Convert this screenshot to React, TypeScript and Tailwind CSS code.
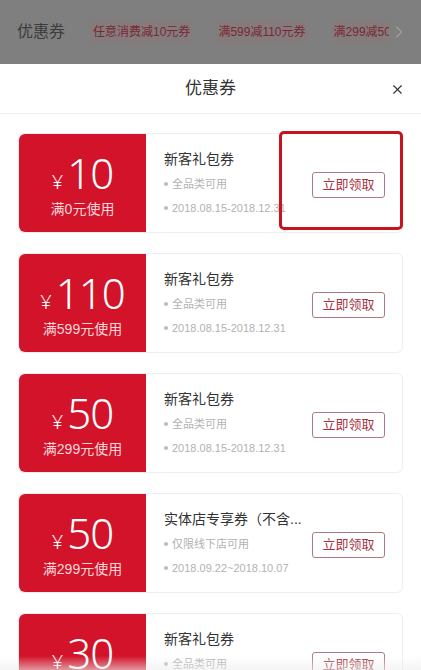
import { X, ChevronRight } from "lucide-react";

type Coupon = {
  amount: string;
  limit: string;
  title: string;
  scope: string;
  period: string;
};

const coupons: Coupon[] = [
  { amount: "10", limit: "满0元使用", title: "新客礼包券", scope: "全品类可用", period: "2018.08.15-2018.12.31" },
  { amount: "110", limit: "满599元使用", title: "新客礼包券", scope: "全品类可用", period: "2018.08.15-2018.12.31" },
  { amount: "50", limit: "满299元使用", title: "新客礼包券", scope: "全品类可用", period: "2018.08.15-2018.12.31" },
  { amount: "50", limit: "满299元使用", title: "实体店专享券（不含...", scope: "仅限线下店可用", period: "2018.09.22~2018.10.07" },
  { amount: "30", limit: "满199元使用", title: "新客礼包券", scope: "全品类可用", period: "2018.08.15-2018.12.31" },
];

const font = { fontFamily: '"Liberation Sans", "Noto Sans CJK SC", sans-serif' };
const numFont = { fontFamily: '"Noto Sans", "Liberation Sans", sans-serif' };

export default function App() {
  return (
    <div className="relative h-[670px] w-[421px] overflow-hidden bg-white" style={font}>
      {/* dimmed page header behind the sheet */}
      <div className="flex h-[64px] items-center bg-[#7f7f7f] pl-[17px] pr-[12px]">
        <span className="text-[16px] text-[#3c3c3c]">优惠券</span>
        <div className="ml-[26px] flex flex-1 items-center overflow-hidden whitespace-nowrap text-[12px] text-[#7c2733]">
          <span className="bg-[#847c7c] px-[2px] py-[3px]">任意消费减10元券</span>
          <span className="ml-[24px] bg-[#847c7c] px-[2px] py-[3px]">满599减110元券</span>
          <span className="ml-[24px] w-[64px] overflow-hidden bg-[#847c7c] px-[2px] py-[3px]">满299减50元券</span>
        </div>
        <ChevronRight className="h-[20px] w-[20px] text-[#a0a0a0]" strokeWidth={1.3} />
      </div>

      {/* sheet */}
      <div className="flex h-[50px] items-center justify-center border-b border-[#efefef]">
        <span className="text-[17px] text-[#333]">优惠券</span>
        <X className="absolute right-[16px] top-[82px] h-[15px] w-[15px] text-[#333]" strokeWidth={1.8} />
      </div>

      <div className="flex flex-col gap-[20px] px-[18px] pt-[19px]">
        {coupons.map((c, i) => (
          <div key={i} className="relative flex h-[100px] rounded-[6px] border border-[#eeeeee] bg-white">
            <div className="flex w-[127px] shrink-0 flex-col items-center justify-center rounded-l-[6px] bg-[#d21329] pt-[2px] text-white">
              <div className="flex items-baseline leading-none" style={numFont}>
                <span className="mr-[4px] text-[20px] font-light">¥</span>
                <span className="text-[42px] font-light tracking-[-1px]">{c.amount}</span>
              </div>
              <span className="mt-[8px] text-[14px] leading-none text-[#f8d6da]">{c.limit}</span>
            </div>
            <div className="flex flex-1 items-center pl-[18px] pr-[17px]">
              <div className="flex-1 whitespace-nowrap">
                <p className="text-[14px] leading-[18px] text-[#333]">{c.title}</p>
                <p className="mt-[8px] flex items-center text-[11px] leading-[16px] text-[#b2b2b2]">
                  <span className="mr-[4px] h-[4px] w-[4px] rounded-full bg-[#bbbbbb]" />
                  {c.scope}
                </p>
                <p className="mt-[8px] flex items-center text-[11px] leading-[16px] text-[#b2b2b2]">
                  <span className="mr-[4px] h-[4px] w-[4px] rounded-full bg-[#bbbbbb]" />
                  {c.period}
                </p>
              </div>
              <button
                type="button"
                className="mt-[4px] flex h-[26px] w-[73px] shrink-0 items-center justify-center rounded-[3px] border border-[#b17784] text-[13px] text-[#a73446]"
              >
                立即领取
              </button>
            </div>
            {i === 0 && (
              <div className="absolute left-[260px] right-[-1px] top-[-3px] h-[99px] rounded-[5px] border-[3px] border-[#c8131f]" />
            )}
          </div>
        ))}
      </div>

      <div className="absolute bottom-0 left-0 h-[14px] w-full bg-gradient-to-b from-transparent to-[#ededed]/60" />
    </div>
  );
}
